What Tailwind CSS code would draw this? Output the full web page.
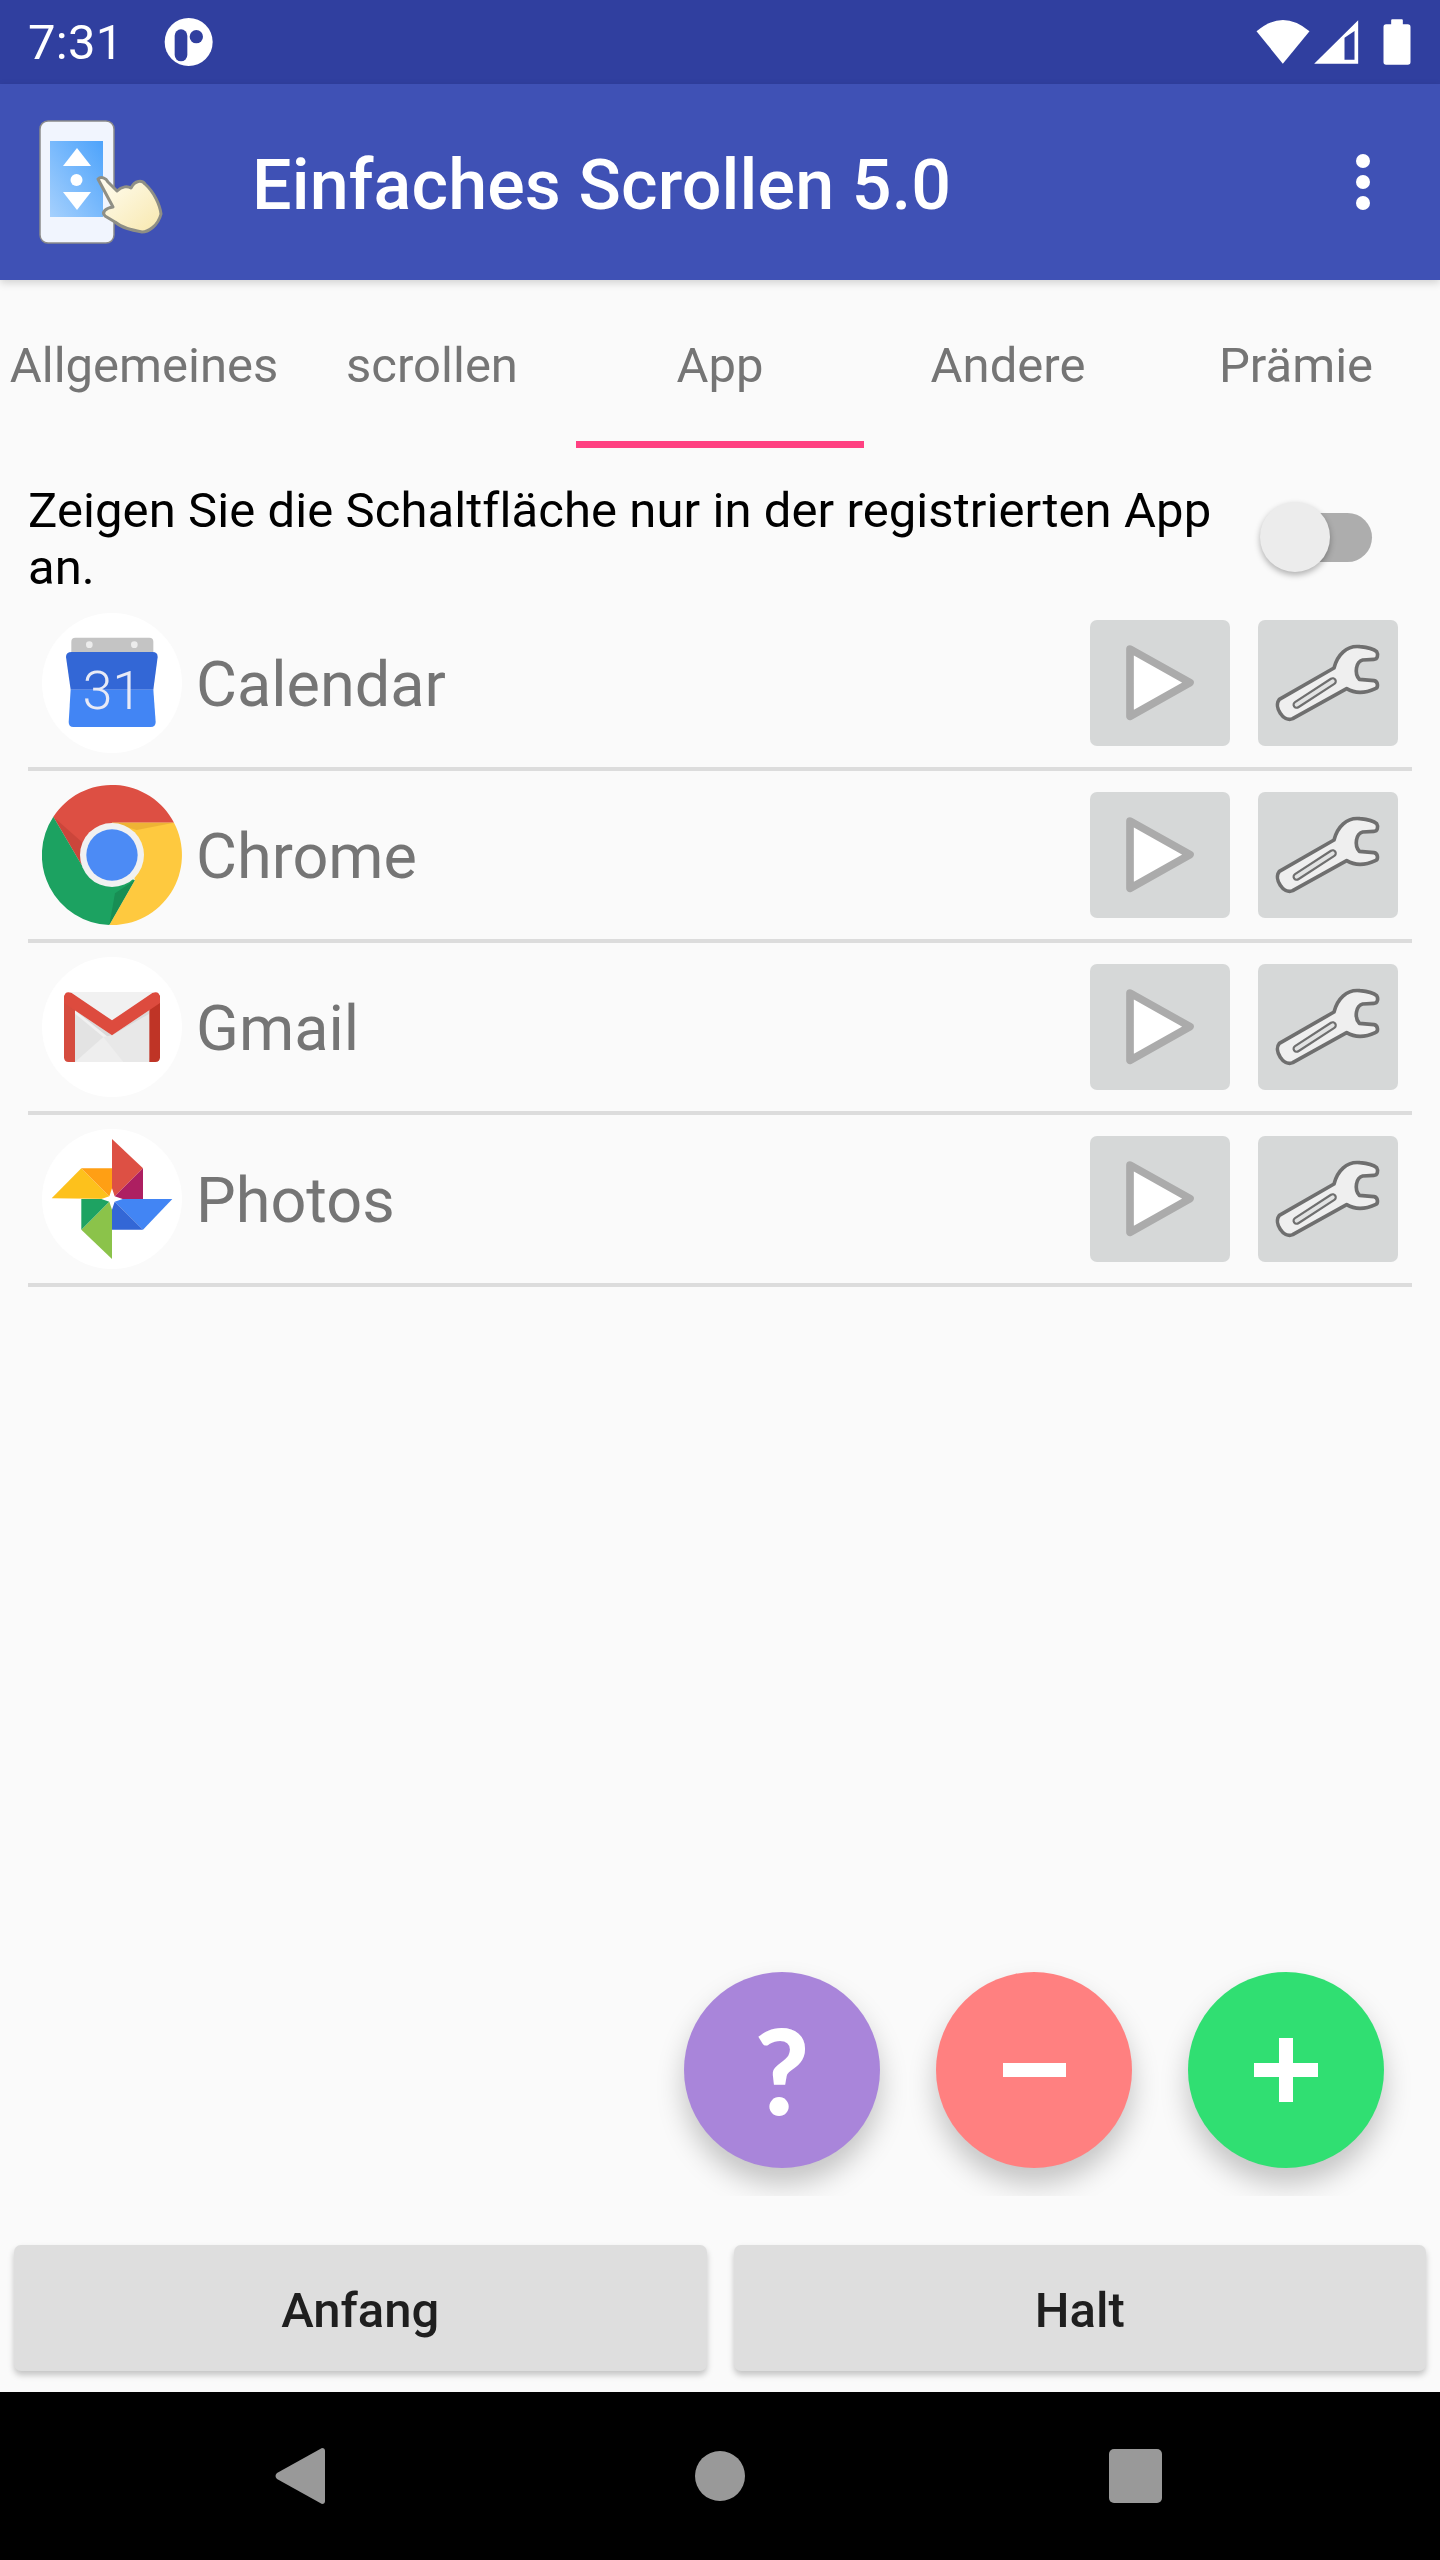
<!DOCTYPE html>
<html lang="en">
<head>
  <meta charset="UTF-8">
  <title>Einfaches Scrollen 5.0</title>
  <script src="https://cdn.jsdelivr.net/npm/@tailwindcss/browser@4"></script>
</head>
<body class="w-[1440px] h-[2560px] flex flex-col overflow-hidden bg-[#fafafa] font-['Roboto',sans-serif]">

  <!-- shared icons -->
  <svg class="hidden">
    <symbol id="playIcon" viewBox="60 420 420 378">
      <path d="M180,507 L360,608 L180,709 Z" fill="#fff" stroke="#ababab" stroke-width="23" stroke-linejoin="round"/>
    </symbol>
    <symbol id="wrenchIcon" viewBox="24 30 420 378">
      <path d="M88,268 L252,174 C262,135 290,105 330,110 C350,112 372,118 380,125 C386,135 382,148 372,148 L338,150 C318,155 312,190 328,208 L372,212 C384,214 386,232 376,236 C350,248 320,254 290,236 L128,326 C100,338 70,290 88,268 Z" fill="#efefef" stroke="#6f6f6f" stroke-width="11" stroke-linejoin="round"/>
      <path d="M140,284 L248,214" fill="none" stroke="#6f6f6f" stroke-width="25" stroke-linecap="round"/>
      <path d="M140,284 L248,214" fill="none" stroke="#e2e3e3" stroke-width="12" stroke-linecap="round"/>
    </symbol>
  </svg>

  <!-- status bar -->
  <div class="h-[84px] bg-[#303f9f] flex items-center text-white shrink-0">
    <span class="ml-[28px] text-[49px] leading-none tracking-[0.3px]">7:31</span>
    <svg class="ml-[40px]" width="49" height="49" viewBox="38 16 147 147">
      <circle cx="112" cy="88" r="72" fill="#fff"/>
      <rect x="70" y="50" width="38" height="96" rx="19" fill="#303f9f"/>
      <circle cx="135" cy="72" r="20" fill="#303f9f"/>
    </svg>
    <svg class="ml-auto mr-[28px]" width="157" height="50" viewBox="470 50 470 150" fill="#fff">
      <path d="M474,93 Q553,25 633,93 L553,190 Z"/>
      <path fill-rule="evenodd" d="M647,190 L779,60 V190 Z M738,178 H768 V92 L738,112 Z"/>
      <path d="M878,72 V60 Q878,57 881,57 H910 Q913,57 913,60 V72 H928 Q936,72 936,80 V185 Q936,193 928,193 H863 Q855,193 855,185 V80 Q855,72 863,72 Z"/>
    </svg>
  </div>

  <!-- app bar -->
  <div class="relative z-10 h-[196px] bg-[#3f51b5] flex items-center pl-[30px] shrink-0 shadow-[0_3px_8px_rgba(0,0,0,0.16)]">
    <svg class="mb-[4px]" width="140" height="140" viewBox="0 0 140 140">
      <defs>
        <linearGradient id="logoScreen" x1="1" y1="0" x2="0" y2="1">
          <stop offset="0" stop-color="#4da3fb"/>
          <stop offset="1" stop-color="#a5d0fd"/>
        </linearGradient>
        <linearGradient id="logoHand" x1="0" y1="0" x2="1" y2="1">
          <stop offset="0" stop-color="#fffdf2"/>
          <stop offset="1" stop-color="#f8e8ae"/>
        </linearGradient>
      </defs>
      <rect x="10" y="11" width="74" height="122" rx="8" fill="#f1f5fe" stroke="#8a8a8a" stroke-width="1.5"/>
      <rect x="20" y="31" width="53" height="76" fill="url(#logoScreen)"/>
      <path d="M47,38 L61,56 H33 Z" fill="#fff"/>
      <circle cx="46.5" cy="70" r="6" fill="#fff"/>
      <path d="M33,82 H61 L47,100 Z" fill="#fff"/>
      <path d="M68,69 C71,66 76,68 78,72 L87,81 C92,76 98,76 101,78 C105,70 112,70 115,74 C124,82 130,95 131,104 C128,116 118,122 112,122 C102,120 92,118 85,112 L75,106 C71,102 76,98 83,97 Z" fill="url(#logoHand)" stroke="#8f8f85" stroke-width="3" stroke-linejoin="round"/>
    </svg>
    <span class="ml-[82px] pt-[5px] text-[70px] font-medium text-white leading-none tracking-[0.14px]">Einfaches Scrollen 5.0</span>
    <div class="ml-auto mr-[70px] flex flex-col gap-[7px]">
      <div class="w-[14px] h-[14px] rounded-full bg-white"></div>
      <div class="w-[14px] h-[14px] rounded-full bg-white"></div>
      <div class="w-[14px] h-[14px] rounded-full bg-white"></div>
    </div>
  </div>

  <!-- tabs -->
  <div class="grid grid-cols-5 h-[168px] text-[49px] text-[#757575] shrink-0">
    <div class="flex items-center justify-center pt-[4px]">Allgemeines</div>
    <div class="flex items-center justify-center pt-[4px]">scrollen</div>
    <div class="relative flex items-center justify-center pt-[4px]">App
      <div class="absolute left-0 right-0 bottom-0 h-[7px] bg-[#ff4081]"></div>
    </div>
    <div class="flex items-center justify-center pt-[4px]">Andere</div>
    <div class="flex items-center justify-center pt-[4px]">Prämie</div>
  </div>

  <!-- content -->
  <div class="flex-1 flex flex-col overflow-hidden">
    <div class="h-[151px] pl-[28px] pt-[34px] flex items-start shrink-0">
      <p class="w-[1232px] text-[49px] leading-[57px] text-black tracking-[0.08px]">Zeigen Sie die Schaltfläche nur in der registrierten App an.</p>
      <div class="relative w-[112px] h-[70px] mt-[20px]">
        <div class="ml-[14px] mt-[11px] w-[98px] h-[49px] rounded-full bg-[#adadad]"></div>
        <div class="absolute left-0 top-0 w-[70px] h-[70px] rounded-full bg-[#ececec] shadow-[0_3px_6px_rgba(0,0,0,0.3)]"></div>
      </div>
    </div>

    <div class="mx-[28px] flex flex-col">
      <div class="h-[172px] border-b-[4px] border-[#dcdcdc] flex items-center pl-[14px] pr-[14px]">
        <svg width="140" height="140" viewBox="66 38 420 420">
          <circle cx="276" cy="248" r="210" fill="#fff"/>
          <rect x="154" y="112" width="246" height="70" rx="12" fill="#c4c4c4"/>
          <circle cx="208" cy="133" r="10" fill="#ececec"/>
          <circle cx="343" cy="133" r="10" fill="#ececec"/>
          <path d="M155,155 H398 Q413,155 413,170 L400,268 H152 L138,170 Q138,155 155,155 Z" fill="#3367d6"/>
          <path d="M152,268 H400 L407,365 Q407,380 392,380 H160 Q146,380 146,365 Z" fill="#4285f4"/>
          <text x="277" y="325" text-anchor="middle" font-size="162" font-weight="300" fill="#e8eaf6" font-family="Roboto, sans-serif">31</text>
        </svg>
        <span class="ml-[14px] pt-[5px] flex-1 text-[63px] text-[#757575]">Calendar</span>
        <div class="w-[140px] h-[126px] rounded-[7px] bg-[#d6d8d8]"><svg width="140" height="126"><use href="#playIcon"/></svg></div>
        <div class="ml-[28px] w-[140px] h-[126px] rounded-[7px] bg-[#d6d8d8]"><svg width="140" height="126"><use href="#wrenchIcon"/></svg></div>
      </div>

      <div class="h-[172px] border-b-[4px] border-[#dcdcdc] flex items-center pl-[14px] pr-[14px]">
        <svg width="140" height="140" viewBox="66 555 420 420">
          <path d="M276,668 H462 A210,210 0 0 0 100,650 L185,795 Z" fill="#dd4f43"/>
          <path d="M100,650 A210,210 0 0 0 268,975 L345,840 L185,795 Z" fill="#1ca261"/>
          <path d="M462,668 A210,210 0 0 1 268,975 L345,840 L276,668 Z" fill="#fec93f"/>
          <path d="M276,668 H462 L350,690 Z" fill="#e3a52f" opacity="0.6"/>
          <path d="M100,650 L185,795 L190,730 Z" fill="#b23a30" opacity="0.4"/>
          <path d="M268,975 L345,840 L285,880 Z" fill="#137a47" opacity="0.5"/>
          <circle cx="276" cy="765" r="96" fill="#f1f1f1"/>
          <circle cx="276" cy="765" r="77" fill="#4c8bf5"/>
        </svg>
        <span class="ml-[14px] pt-[5px] flex-1 text-[63px] text-[#757575]">Chrome</span>
        <div class="w-[140px] h-[126px] rounded-[7px] bg-[#d6d8d8]"><svg width="140" height="126"><use href="#playIcon"/></svg></div>
        <div class="ml-[28px] w-[140px] h-[126px] rounded-[7px] bg-[#d6d8d8]"><svg width="140" height="126"><use href="#wrenchIcon"/></svg></div>
      </div>

      <div class="h-[172px] border-b-[4px] border-[#dcdcdc] flex items-center pl-[14px] pr-[14px]">
        <svg width="140" height="140" viewBox="66 50 420 420">
          <circle cx="276" cy="260" r="210" fill="#fff"/>
          <rect x="150" y="155" width="250" height="210" fill="#f1f1f1"/>
          <path d="M165,210 L276,285 L388,210 V240 L276,300 L165,210 Z" fill="#d9d9d9"/>
          <path d="M165,365 L250,290 L310,365 Z" fill="#eeeeee"/>
          <path d="M165,220 L250,290 L165,365 Z" fill="#e3e3e3"/>
          <path d="M388,220 V365 H310 L250,290 L276,285 Z" fill="#e8e8e8"/>
          <path d="M132,170 Q132,165 135,165 H165 V365 H146 Q132,365 132,351 Z" fill="#d54c3f"/>
          <path d="M388,165 H418 Q420,165 420,170 V351 Q420,365 406,365 H388 Z" fill="#bf3426"/>
          <path d="M132,172 Q134,150 155,158 L276,240 L397,158 Q418,150 420,172 V188 L276,285 L132,188 Z" fill="#dd4b3e"/>
        </svg>
        <span class="ml-[14px] pt-[5px] flex-1 text-[63px] text-[#757575]">Gmail</span>
        <div class="w-[140px] h-[126px] rounded-[7px] bg-[#d6d8d8]"><svg width="140" height="126"><use href="#playIcon"/></svg></div>
        <div class="ml-[28px] w-[140px] h-[126px] rounded-[7px] bg-[#d6d8d8]"><svg width="140" height="126"><use href="#wrenchIcon"/></svg></div>
      </div>

      <div class="h-[172px] border-b-[4px] border-[#dcdcdc] flex items-center pl-[14px] pr-[14px]">
        <svg width="140" height="140" viewBox="66 567 420 420">
          <circle cx="276" cy="777" r="210" fill="#fff"/>
          <path d="M276,597 L369,685 L276,777 Z" fill="#dd5044"/>
          <path d="M369,685 V777 H276 Z" fill="#ad1f61"/>
          <path d="M457,777 L369,869 L276,777 Z" fill="#4285f4"/>
          <path d="M369,869 H276 V777 Z" fill="#3367d6"/>
          <path d="M276,957 L184,869 L276,777 Z" fill="#8bc34a"/>
          <path d="M184,869 V777 H276 Z" fill="#1ea362"/>
          <path d="M95,775 L184,685 L276,777 Z" fill="#fdc11c"/>
          <path d="M184,685 H276 V777 Z" fill="#ff9f14"/>
          <path d="M276,745 L284,769 L308,777 L284,785 L276,809 L268,785 L244,777 L268,769 Z" fill="#fff"/>
        </svg>
        <span class="ml-[14px] pt-[5px] flex-1 text-[63px] text-[#757575]">Photos</span>
        <div class="w-[140px] h-[126px] rounded-[7px] bg-[#d6d8d8]"><svg width="140" height="126"><use href="#playIcon"/></svg></div>
        <div class="ml-[28px] w-[140px] h-[126px] rounded-[7px] bg-[#d6d8d8]"><svg width="140" height="126"><use href="#wrenchIcon"/></svg></div>
      </div>
    </div>

    <!-- floating buttons -->
    <div class="mt-auto flex justify-end gap-[56px] pr-[56px] pb-[28px]">
      <div class="w-[196px] h-[196px] rounded-full bg-[#a985da] flex items-center justify-center shadow-[0_16px_28px_rgba(0,0,0,0.22)]">
        <span class="font-['Lato',sans-serif] font-black text-[118px] leading-none text-white">?</span>
      </div>
      <div class="w-[196px] h-[196px] rounded-full bg-[#ff8080] flex items-center justify-center shadow-[0_16px_28px_rgba(0,0,0,0.22)]">
        <div class="w-[63px] h-[14px] bg-white"></div>
      </div>
      <div class="w-[196px] h-[196px] rounded-full bg-[#30df72] flex items-center justify-center shadow-[0_16px_28px_rgba(0,0,0,0.22)]">
        <svg width="64" height="64" viewBox="0 0 64 64" fill="#fff"><rect x="25" width="14" height="64"/><rect y="25" width="64" height="14"/></svg>
      </div>
    </div>
  </div>

  <!-- bottom buttons -->
  <div class="h-[196px] shrink-0 flex gap-[27px] px-[14px] pt-[49px]">
    <div class="flex-1 h-[126px] pt-[5px] rounded-[7px] bg-[#dedede] flex items-center justify-center text-[49px] font-medium text-[#1f1f1f] shadow-[0_4px_6px_rgba(0,0,0,0.22)]">Anfang</div>
    <div class="flex-1 h-[126px] pt-[5px] rounded-[7px] bg-[#dedede] flex items-center justify-center text-[49px] font-medium text-[#1f1f1f] shadow-[0_4px_6px_rgba(0,0,0,0.22)]">Halt</div>
  </div>

  <!-- nav bar -->
  <div class="h-[168px] shrink-0 bg-black flex items-center pl-[275px]">
    <svg width="50" height="56" viewBox="0 0 50 56" fill="#999"><path d="M47,0 Q50,0 50,3 V53 Q50,56 47,56 L2,31 Q-1,28 2,25 Z"/></svg>
    <div class="ml-[370px] w-[50px] h-[50px] rounded-full bg-[#999]"></div>
    <div class="ml-[364px] w-[53px] h-[54px] rounded-[5px] bg-[#999]"></div>
  </div>

</body>
</html>
